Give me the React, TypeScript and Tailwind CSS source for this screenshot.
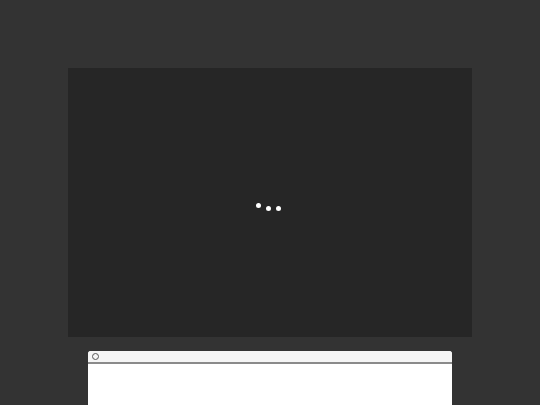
import React from "react";

export default function App() {
  return (
    <div className="w-[540px] h-[405px] overflow-hidden bg-[#333333] flex flex-col items-center pt-[68px]">
      <div className="w-[404px] h-[269px] shrink-0 bg-[#262626] flex items-center justify-center">
        <div className="flex items-start gap-[5px] mt-[10px] mr-[4px]">
          <span className="w-[5px] h-[5px] rounded-full bg-white -mt-[2px]" />
          <span className="w-[5px] h-[5px] rounded-full bg-white mt-[1px]" />
          <span className="w-[5px] h-[5px] rounded-full bg-white mt-[1px]" />
        </div>
      </div>
      <div className="mt-[14px] w-[364px] h-[60px] shrink-0 bg-white rounded-t-[3px] overflow-hidden flex flex-col">
        <div className="h-[11px] bg-[#f5f5f5] flex items-center pl-[4px] border-b-[2px] border-[#8a8a8a] box-content">
          <span className="w-[7px] h-[7px] rounded-full border border-[#555555]" />
        </div>
        <div className="flex-1 bg-white" />
      </div>
    </div>
  );
}
